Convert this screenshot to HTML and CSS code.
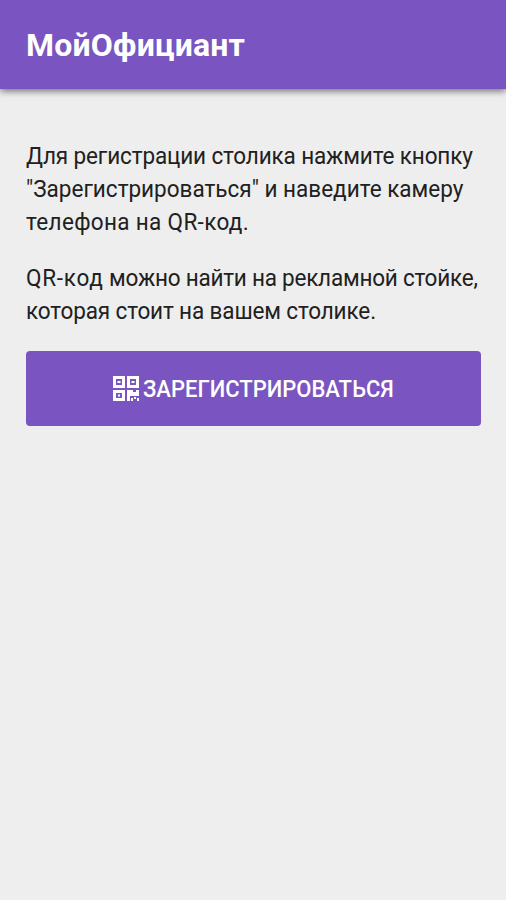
FILE: index.html
```html
<!DOCTYPE html>
<html lang="ru">
<head>
    <meta charset="UTF-8">
    <meta name="viewport" content="width=device-width, initial-scale=1.0">
    <title>МойОфициант</title>
    <link rel="stylesheet" href="styles.css">
</head>
<body>

<header class="header">
    <h1 class="title">МойОфициант</h1>
</header>

<main class="content">
    <p><span class="tight">Для регистрации столика нажмите кнопку</span><br>"Зарегистрироваться" и наведите камеру<br><span class="wide">телефона на QR-код.</span></p>
    <p><span class="code">QR-код</span><span class="tighter"> можно найти на рекламной стойке,</span><br><span class="tight">которая стоит на вашем столике.</span></p>

    <button class="button" type="button">
        <svg class="icon" viewBox="0 0 26 26" fill="currentColor" aria-hidden="true">
            <path fill-rule="evenodd" d="M0 0h12v12H0zM3 3v6h6V3zM4.500 5h3v2h-3zM14 0h12v12H14zM17 3v6h6V3zM18.500 5h3v2h-3zM0 14h12v11H0zM3 17v5h6v-5zM5 18.500h2v2H5z"/>
            <path d="M14 14h6v2h3v-2h3v6h-9v5h-3zM18 22h2v3h-2zM21 21h2v2h-2zM24 22h2v3h-2z"/>
        </svg>
        <span class="label">ЗАРЕГИСТРИРОВАТЬСЯ</span>
    </button>
</main>

</body>
</html>
```
FILE: styles.css
```css
body {
    margin: 0;
    min-height: 100vh;
    background-color: #eeeeee;
    color: #212121;
    font-family: Roboto, sans-serif;
}
.header {
    height: 89px;
    display: flex;
    align-items: center;
    padding: 0 26px;
    background-color: #7a54c1;
    box-shadow: 0 2px 7px rgba(0, 0, 0, 0.55);
}
.title {
    margin: 0;
    color: white;
    font-size: 32px;
    font-weight: 700;
    letter-spacing: 0.2px;
}
.content {
    padding: 51px 25px 0 26px;
}
p {
    margin: 0 0 23px;
    font-size: 24px;
    line-height: 33px;
    white-space: nowrap;
    transform: scaleX(0.938);
    transform-origin: left;
}
.tight {
    letter-spacing: -0.14px;
}
.tighter {
    letter-spacing: -0.24px;
}
.wide {
    letter-spacing: 0.35px;
}
.code {
    letter-spacing: 0.8px;
}
.button {
    width: 100%;
    height: 75px;
    display: flex;
    align-items: center;
    justify-content: center;
    gap: 4px;
    padding: 1px 2px 0 0;
    border: none;
    border-radius: 4px;
    background-color: #7a54c1;
    color: white;
    font-family: inherit;
    font-size: 24px;
    font-weight: 500;
    cursor: pointer;
}
.icon {
    width: 26px;
    height: 26px;
}
.label {
    width: 250px;
    text-align: left;
    white-space: nowrap;
    transform: scaleX(0.917);
    transform-origin: left;
}
```
